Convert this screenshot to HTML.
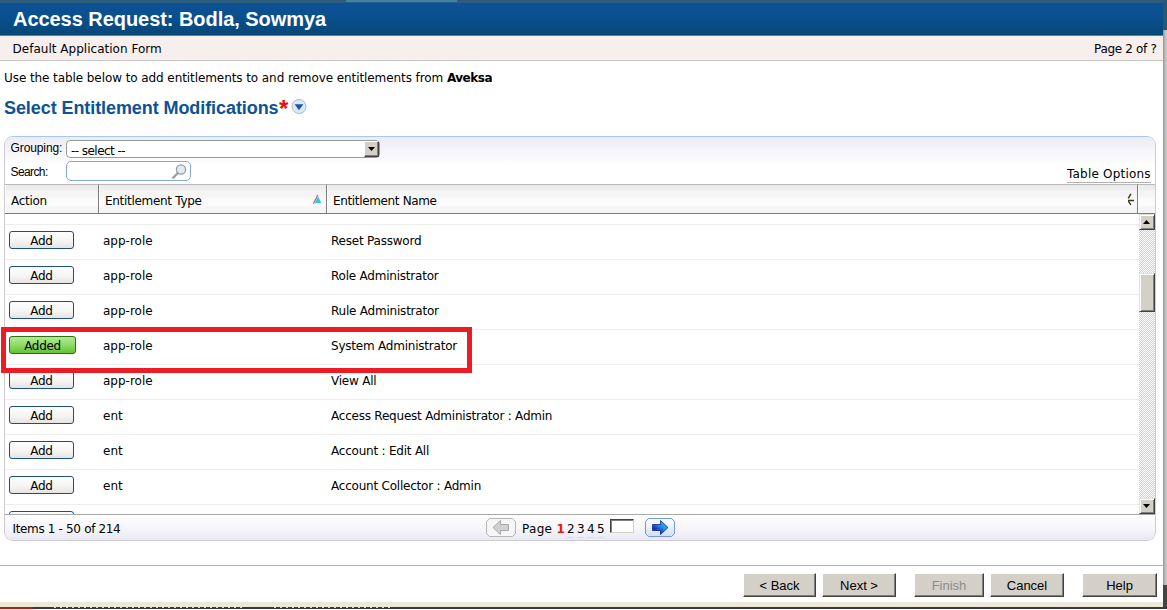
<!DOCTYPE html>
<html><head><meta charset="utf-8"><title>Access Request</title>
<style>
html,body{margin:0;padding:0;}
body{width:1167px;height:610px;overflow:hidden;position:relative;background:#fff;font-family:"DejaVu Sans","Liberation Sans",sans-serif;font-size:12px;color:#000;}
.abs{position:absolute;}
.t{position:absolute;white-space:pre;line-height:14px;height:14px;}
#topstrip{left:0;top:0;width:1167px;height:3px;background:#2a5c7c;}
#rtop{left:1163px;top:0;width:4px;height:30px;background:#27586f;}
#rshadow{left:1163px;top:30px;width:4px;height:555px;background:linear-gradient(90deg,#909090 0,#b0b0b0 35%,#c4c4c4 70%,#cacaca 100%);}
#rdark{left:1163px;top:585px;width:4px;height:24px;background:#444;}
#titlebar{left:0;top:3px;width:1163px;height:32px;background:linear-gradient(180deg,#0c5296 0,#0a4f8e 45%,#064878 100%);}
#titleline{left:0;top:35px;width:1163px;height:1px;background:#1f9bb8;}
#title{left:13px;top:7px;font-family:"Liberation Sans",sans-serif;font-weight:bold;font-size:20px;line-height:24px;height:24px;color:#fff;letter-spacing:-0.05px;}
#sub{left:0;top:36px;width:1163px;height:24px;background:#f7eeee;}
#subline{left:0;top:60px;width:1163px;height:1px;background:#c6c6c6;}
#h2{left:4px;top:97px;font-family:"Liberation Sans",sans-serif;font-weight:bold;font-size:18px;line-height:22px;height:22px;color:#0b5394;letter-spacing:-0.08px;}
#panel{left:4px;top:136px;width:1150px;height:403px;border:1px solid #cfcad2;border-top-color:#a9c9f3;border-radius:9px;background:#fff;overflow:hidden;}
#ptop{left:0;top:0;width:1150px;height:47px;background:linear-gradient(180deg,#ebebf3 0,#f5f5fa 30%,#fff 58%);}
#pfoot{left:0;top:377px;width:1150px;height:25px;background:linear-gradient(180deg,#fff 0,#f6f6fb 50%,#e9e9f5 100%);border-top:1px solid #a8a8a8;}
.sm{font-family:'Liberation Sans',sans-serif;font-size:12px;line-height:14px;height:14px;}
#sel{left:61px;top:3px;width:312px;height:16px;border:1px solid #9a9a9a;border-radius:4px;background:#fff;}
#selbtn{left:297px;top:0px;width:13px;height:14px;background:#d4d0c8;border:1px solid;border-color:#fff #404040 #404040 #fff;box-shadow:inset -1px -1px 0 #808080;}
#search{left:61px;top:24px;width:123px;height:18px;border:1px solid #86a8d4;border-radius:5px;background:#fff;}
.hdr{position:absolute;top:47px;height:28px;background:linear-gradient(180deg,#ebebed 0,#ededee 16%,#f4f4f5 20%,#f5f5f6 40%,#fbfafb 46%,#fbfbfc 72%,#f5f4f6 78%,#f4f3f5 100%);box-shadow:inset 1px 0 0 #fff;border-top:1px solid #b9b9b9;border-bottom:1px solid #7c7c7c;border-right:1px solid #7c7c7c;box-sizing:content-box;}
.hdr span{position:absolute;top:9px;line-height:14px;white-space:pre;}
.rowline{position:absolute;left:0;width:1134px;height:1px;background:#ececec;}
.btn{position:absolute;left:4px;width:63px;height:16px;border:1px solid #1d4f85;border-radius:3px;background:linear-gradient(180deg,#fefefe 0,#f6f5f3 55%,#e6e4e0 100%);text-align:center;line-height:18px;font-size:12px;letter-spacing:-0.3px;}
.btn.added{width:65px;border-color:#2f6e12;background:linear-gradient(180deg,#b0ec92 0,#8edb66 50%,#63c232 100%);}
.c2{position:absolute;left:98px;white-space:pre;line-height:14px;}
.c3{position:absolute;left:326px;white-space:pre;line-height:14px;letter-spacing:-0.22px;}
.wbtn{position:absolute;top:573px;height:22px;background:#d4d0c8;border:1px solid;border-color:#fff #404040 #404040 #fff;box-shadow:inset -1px -1px 0 #808080;text-align:center;font-family:'Liberation Sans',sans-serif;font-size:13px;line-height:24px;white-space:pre;}
#redbox{left:1px;top:327px;width:461px;height:36px;border:5px solid #ed1c24;}
</style></head><body>
<div class="abs" id="topstrip"></div>
<div class="abs" style="left:346px;top:0;width:111px;height:2px;background:#3c86ac;"></div>
<div class="abs" id="rtop"></div>
<div class="abs" id="rshadow"></div>
<div class="abs" id="rdark"></div>
<div class="abs" id="titlebar"></div>
<div class="abs" id="titleline"></div>
<div class="t" id="title">Access Request: Bodla, Sowmya</div>
<div class="abs" id="sub"></div>
<div class="abs" id="subline"></div>
<div class="t" style="left:12.5px;top:42px;letter-spacing:0.02px">Default Application Form</div>
<div class="t" style="left:1094px;top:42px;letter-spacing:-0.32px">Page 2 of ?</div>
<div class="t" style="left:4px;top:71px;letter-spacing:-0.08px">Use the table below to add entitlements to and remove entitlements from <b style="letter-spacing:-0.5px">Aveksa</b></div>
<div class="t" id="h2">Select Entitlement Modifications<span style="color:#f00a0a;font-size:24px;line-height:0;position:relative;top:3px;left:0.5px;letter-spacing:0">*</span></div>
<svg class="abs" style="left:290px;top:98px" width="18" height="18" viewBox="0 0 18 18"><circle cx="9" cy="8.5" r="7" fill="#dfe9f8" stroke="#9fb9df" stroke-width="1"/><path d="M4.6 6.3 L13.4 6.3 L9 12.3 Z" fill="#1c56b4"/></svg>
<div class="abs" id="panel">
 <div class="abs" id="ptop"></div>
 <div class="t sm" style="left:5.5px;top:4px;letter-spacing:-0.1px">Grouping:</div>
 <div class="abs" id="sel"><span class="t" style="left:4px;top:3px;letter-spacing:-0.55px">-- select --</span><div class="abs" id="selbtn"><svg class="abs" style="left:3px;top:5px" width="7" height="4"><path d="M0 0H7L3.5 4Z" fill="#000"/></svg></div></div>
 <div class="t sm" style="left:5.5px;top:28px;letter-spacing:-0.6px">Search:</div>
 <div class="abs" id="search"><svg class="abs" style="left:104px;top:1px" width="17" height="17" viewBox="0 0 17 17"><circle cx="10" cy="6.5" r="4.6" fill="#dfeaf8" stroke="#9a9a9a" stroke-width="1.3"/><path d="M6.6 10.2 L2.2 14.8" stroke="#9a9a9a" stroke-width="2.2" stroke-linecap="round"/></svg></div>
 <div class="t" style="left:1062px;top:30px;letter-spacing:0.2px;border-bottom:1px solid #b0b0b0;height:15px;">Table Options</div>
 <div class="hdr" style="left:0;width:93px;"><span style="left:6px;letter-spacing:-0.3px">Action</span></div>
 <div class="hdr" style="left:94px;width:227px;"><span style="left:6px;letter-spacing:-0.3px">Entitlement Type</span><svg class="abs" style="left:214px;top:9px" width="9" height="10" viewBox="0 0 9 10"><path d="M5.2 2.6 L8.3 9 L1.8 9 Z" fill="#38c0f0"/><path d="M4.8 1 L0.4 9.8" stroke="#9a7a48" stroke-width="1.3"/></svg></div>
 <div class="hdr" style="left:322px;width:810px;"><span style="left:6px;letter-spacing:-0.35px">Entitlement Name</span><svg class="abs" style="left:800px;top:8px" width="8" height="13" viewBox="0 0 8 13"><path d="M3.9 0.8 L1.2 5.4 M1 7.5 H7 M1.4 8.4 L3.9 11.9" stroke="#3a3414" stroke-width="1.4" fill="none"/></svg></div>
 <div class="hdr" style="left:1133px;width:17px;border-right:none"></div>
 <div class="rowline" style="top:87px"></div>
 <div class="btn" style="top:94px">Add</div>
 <div class="c2" style="top:97px">app-role</div><div class="c3" style="top:97px">Reset Password</div>
 <div class="rowline" style="top:122px"></div>
 <div class="btn" style="top:129px">Add</div>
 <div class="c2" style="top:132px">app-role</div><div class="c3" style="top:132px">Role Administrator</div>
 <div class="rowline" style="top:157px"></div>
 <div class="btn" style="top:164px">Add</div>
 <div class="c2" style="top:167px">app-role</div><div class="c3" style="top:167px">Rule Administrator</div>
 <div class="rowline" style="top:192px"></div>
 <div class="btn added" style="top:199px">Added</div>
 <div class="c2" style="top:202px">app-role</div><div class="c3" style="top:202px">System Administrator</div>
 <div class="rowline" style="top:227px"></div>
 <div class="btn" style="top:234px">Add</div>
 <div class="c2" style="top:237px">app-role</div><div class="c3" style="top:237px">View All</div>
 <div class="rowline" style="top:262px"></div>
 <div class="btn" style="top:269px">Add</div>
 <div class="c2" style="top:272px">ent</div><div class="c3" style="top:272px">Access Request Administrator : Admin</div>
 <div class="rowline" style="top:297px"></div>
 <div class="btn" style="top:304px">Add</div>
 <div class="c2" style="top:307px">ent</div><div class="c3" style="top:307px">Account : Edit All</div>
 <div class="rowline" style="top:332px"></div>
 <div class="btn" style="top:339px">Add</div>
 <div class="c2" style="top:342px">ent</div><div class="c3" style="top:342px">Account Collector : Admin</div>
 <div class="rowline" style="top:367px"></div>
 <div class="btn" style="top:374px">Add</div>
 <!-- scrollbar -->
 <div class="abs" style="left:1134px;top:77px;width:16px;height:301px;background:#eae8e3;background-image:repeating-conic-gradient(#fff 0 25%,#d4d0c8 0 50%);background-size:2px 2px;"></div>
 <div class="abs sb" style="left:1134px;top:77px;width:14px;height:14px;background:#d4d0c8;border:1px solid;border-color:#e4e2dc #404040 #404040 #e4e2dc;box-shadow:inset 1px 1px 0 #fff,inset -1px -1px 0 #808080;"><svg class="abs" style="left:3px;top:5px" width="7" height="4"><path d="M0 4H7L3.5 0Z" fill="#000"/></svg></div>
 <div class="abs sb" style="left:1134px;top:136px;width:14px;height:37px;background:#d4d0c8;border:1px solid;border-color:#e4e2dc #404040 #404040 #e4e2dc;box-shadow:inset 1px 1px 0 #fff,inset -1px -1px 0 #808080;"></div>
 <div class="abs sb" style="left:1134px;top:361px;width:14px;height:14px;background:#d4d0c8;border:1px solid;border-color:#e4e2dc #404040 #404040 #e4e2dc;box-shadow:inset 1px 1px 0 #fff,inset -1px -1px 0 #808080;"><svg class="abs" style="left:3px;top:5px" width="7" height="4"><path d="M0 0H7L3.5 4Z" fill="#000"/></svg></div>
 <div class="abs" id="pfoot">
  <div class="t" style="left:7.5px;top:7px;letter-spacing:-0.34px">Items 1 - 50 of 214</div>
  <svg class="abs" style="left:481px;top:3px" width="30" height="19" viewBox="0 0 30 19"><path d="M3.5 0.5H26.5L29.5 3.5V15.5L26.5 18.5H3.5L0.5 15.5V3.5Z" fill="#f6f6f6" stroke="#b4b4b4"/><path d="M7 9.5 L14.5 2.5 V6.5 H22.5 V12.5 H14.5 V16.5 Z" fill="#d0d0d0" stroke="#a8a8a8"/></svg>
  <div class="t" style="left:517px;top:7px;letter-spacing:0.3px">Page</div>
  <div class="t" style="left:551.5px;top:7px;color:#f01800;font-weight:bold;letter-spacing:-1px">1</div>
  <div class="t" style="left:562px;top:7px;letter-spacing:2.4px;">2345</div><div class="abs" style="left:562px;top:22px;width:37px;height:1px;background:repeating-linear-gradient(90deg,#dcdcdc 0 7px,transparent 7px 10px)"></div>
  <div class="abs" style="left:605px;top:4px;width:22px;height:12px;background:#fff;border:1px solid;border-color:#404040 #d4d0c8 #d4d0c8 #404040;box-shadow:inset 1px 1px 0 #808080;"></div>
  <svg class="abs" style="left:640px;top:3px" width="30" height="19" viewBox="0 0 30 19"><defs><linearGradient id="bg2" x1="0" y1="0" x2="0" y2="1"><stop offset="0" stop-color="#fbfcff"/><stop offset="0.45" stop-color="#eef1fb"/><stop offset="1" stop-color="#d3dbf5"/></linearGradient><linearGradient id="ag" x1="0.9" y1="0.1" x2="0.2" y2="0.95"><stop offset="0" stop-color="#28c4f8"/><stop offset="0.45" stop-color="#1c8fe6"/><stop offset="0.75" stop-color="#1638c4"/><stop offset="1" stop-color="#101c8c"/></linearGradient></defs><path d="M3.5 0.5H26.5L29.5 3.5V15.5L26.5 18.5H3.5L0.5 15.5V3.5Z" fill="url(#bg2)" stroke="#6d9be4"/><path d="M23 9.5 L15.5 2.5 V6.5 H7.5 V12.5 H15.5 V16.5 Z" fill="url(#ag)" stroke="#12288e" stroke-width="0.8"/></svg>
 </div>
</div>
<div class="abs" id="redbox"></div>
<div class="abs" style="left:0;top:565px;width:1163px;height:1px;background:#b4b4b4;"></div>
<div class="wbtn" style="left:743px;width:71px;">&lt; Back</div>
<div class="wbtn" style="left:822px;width:72px;">Next &gt;</div>
<div class="wbtn" style="left:914px;width:68px;color:#8e8c8a;">Finish</div>
<div class="wbtn" style="left:990px;width:72px;">Cancel</div>
<div class="wbtn" style="left:1082px;width:73px;">Help</div>
<div class="abs" style="left:0;top:602px;width:1163px;height:5px;background:#ece9d8;"></div>
<div class="abs" style="left:0;top:607px;width:1167px;height:2px;background:#3a3a3a;"></div>
<div class="abs" style="left:0;top:607px;width:33px;height:2px;background:#c01818;"></div>
<div class="abs" style="left:50px;top:607px;width:195px;height:1px;background:repeating-linear-gradient(90deg,#3a3a3a 0 4px,#ddd 4px 6px);"></div>
<div class="abs" style="left:270px;top:607px;width:120px;height:1px;background:repeating-linear-gradient(90deg,#3a3a3a 0 4px,#ddd 4px 6px);"></div>
</body></html>
